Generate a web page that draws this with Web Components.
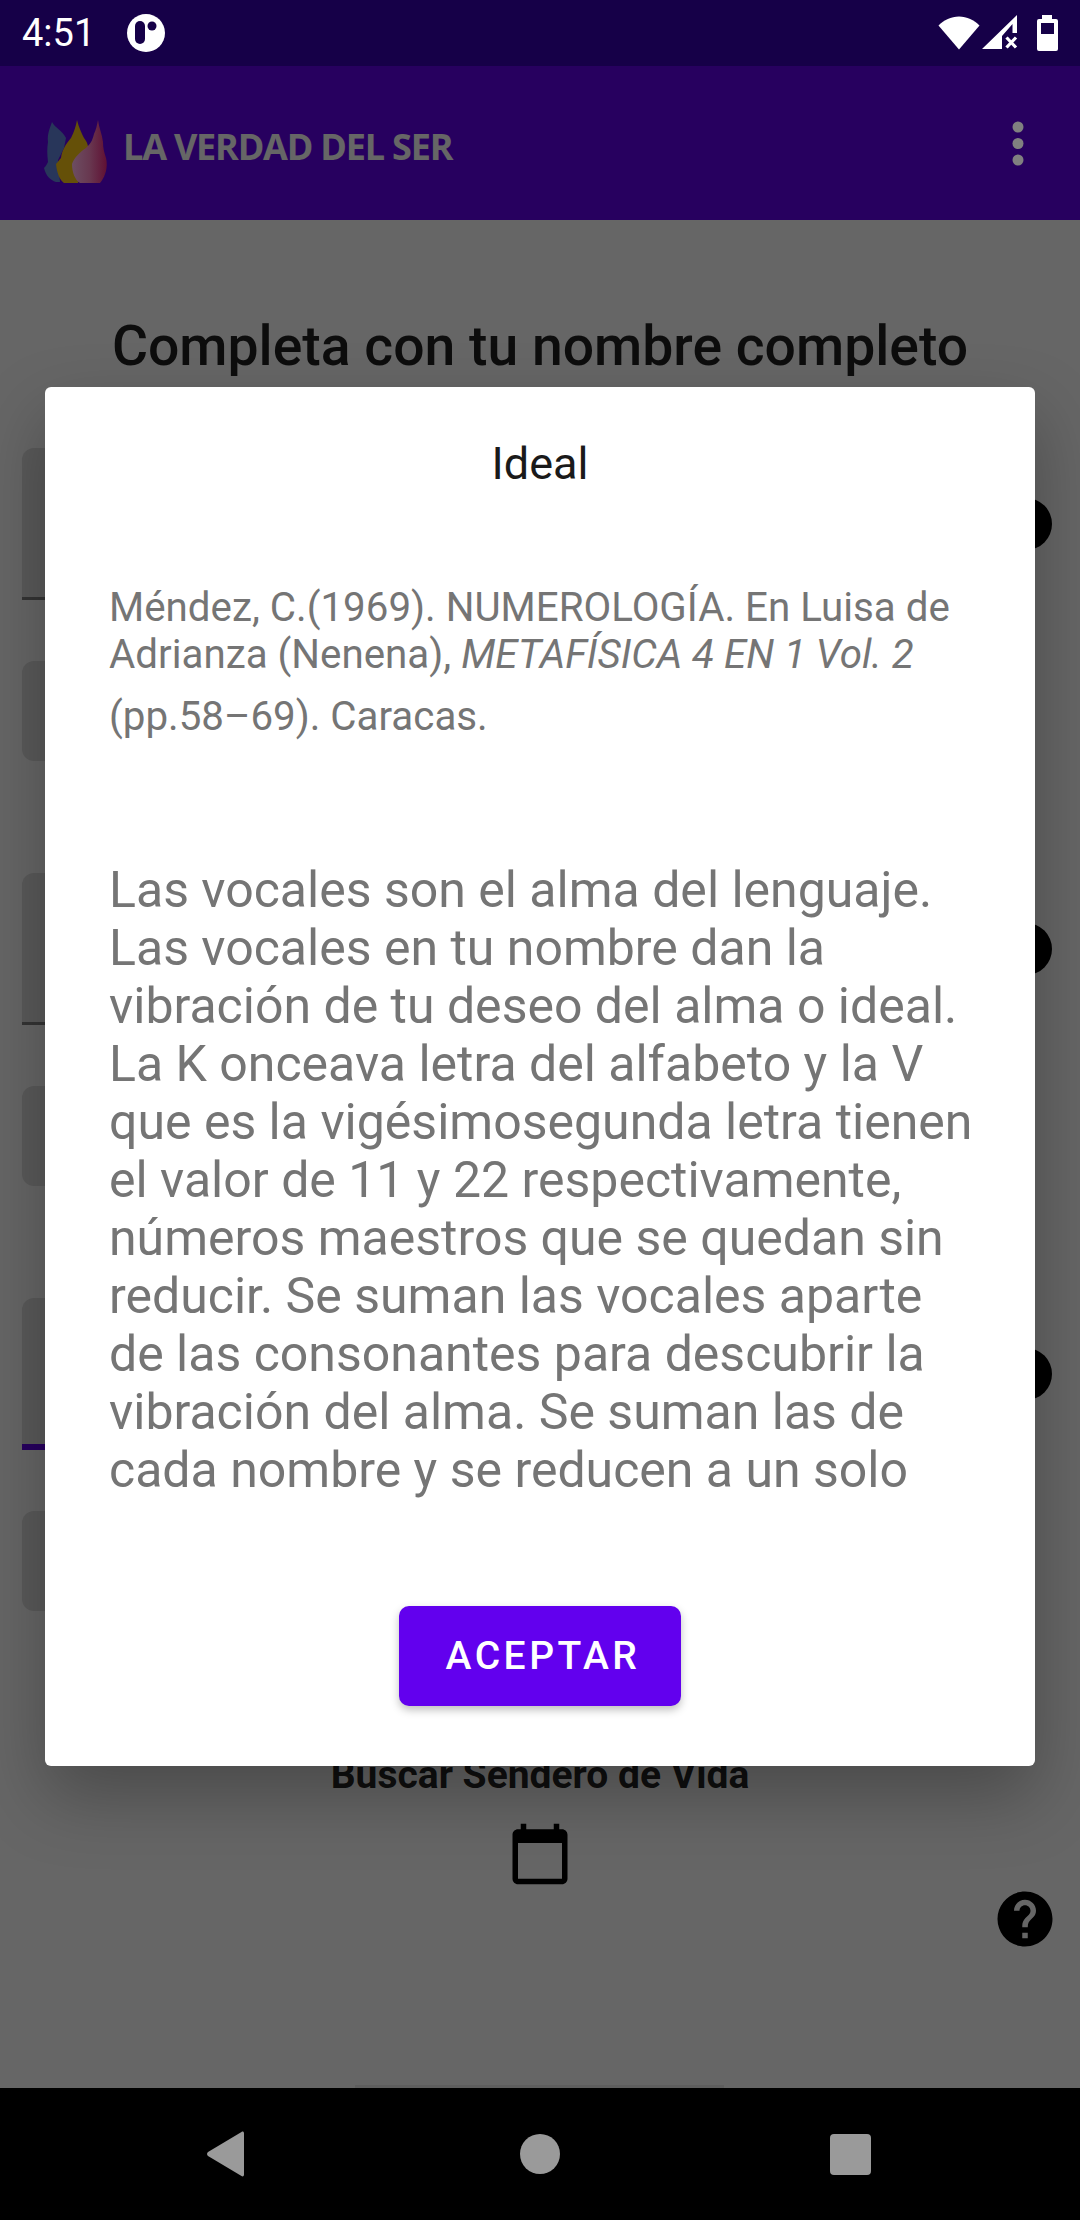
<!DOCTYPE html>
<html lang="es">
<head>
<meta charset="utf-8">
<title>La Verdad del Ser</title>
<style>
    html, body{ margin: 0; padding: 0; }
    body{
        width: 1080px;
        height: 2220px;
        overflow: hidden;
        display: flex;
        flex-direction: column;
        font-family: Roboto, "Liberation Sans", sans-serif;
        background: #000;
    }
</style>
</head>
<body>

<status-bar></status-bar>

<app-screen>
    <app-bar slot="bar">LA VERDAD DEL SER</app-bar>
    <name-form>Completa con tu nombre completo</name-form>
    <info-dialog slot="dialog" heading="Ideal">
        <p slot="cite">Méndez, C.(1969). NUMEROLOGÍA. En Luisa de Adrianza (Nenena), <i>METAFÍSICA 4 EN 1 Vol. 2</i></p>
        <p slot="cite" class="tail">(pp.58–69). Caracas.</p>
        Las vocales son el alma del lenguaje. Las vocales en tu nombre dan la vibración de tu deseo del alma o ideal. La K onceava letra del alfabeto y la V que es la vigésimosegunda letra tienen el valor de 11 y 22 respectivamente, números maestros que se quedan sin reducir. Se suman las vocales aparte de las consonantes para descubrir la vibración del alma. Se suman las de cada nombre y se reducen a un solo
    </info-dialog>
</app-screen>

<nav-bar></nav-bar>

<script>
class StatusBar extends HTMLElement{
    constructor(){
        super()
        this.attachShadow({mode: 'open'})
        this.shadowRoot.innerHTML = `
            <style>
                :host{
                    display: flex;
                    align-items: center;
                    flex: none;
                    height: 66px;
                    padding: 0 22px;
                    box-sizing: border-box;
                    background: #160048;
                    color: #fff;
                }
                span{ font-size: 38px; line-height: 66px; width: 105px; }
                .right{ margin-left: auto; display: flex; align-items: center; }
                svg{ display: block; }
            </style>
            <span>4:51</span>
            <svg width="38" height="38" viewBox="0 0 38 38">
                <circle cx="19" cy="19" r="19" fill="#fff"/>
                <rect x="8" y="7" width="10" height="23" rx="5" fill="#160048"/>
                <circle cx="25" cy="12" r="4.500" fill="#160048"/>
            </svg>
            <div class="right">
                <svg width="42" height="34" viewBox="0 0 42 34">
                    <path d="M0.500 9.500C6 4 13 0.500 21 0.500S36 4 41.500 9.500L21 33.500Z" fill="#fff"/>
                </svg>
                <svg style="margin-left:2px" width="36" height="36" viewBox="0 0 36 36">
                    <path d="M35 0V18H30.500V9L20 21V34H0Z" fill="#fff"/>
                    <path d="M24.500 22.500L34 32.500M34 22.500L24.500 32.500" stroke="#fff" stroke-width="3.200" fill="none"/>
                </svg>
                <svg style="margin-left:19px" width="21" height="36" viewBox="0 0 21 36">
                    <path d="M5 0H15V4H19Q21 4 21 6V34Q21 36 19 36H2Q0 36 0 34V6Q0 4 2 4H5Z" fill="#fff"/>
                    <rect x="4" y="8" width="13" height="11" fill="#160048"/>
                </svg>
            </div>
        `
    }
}

class AppBar extends HTMLElement{
    constructor(){
        super()
        this.attachShadow({mode: 'open'})
        this.shadowRoot.innerHTML = `
            <style>
                :host{
                    display: flex;
                    align-items: center;
                    flex: none;
                    height: 154px;
                    padding: 0 0 0 44px;
                    box-sizing: border-box;
                    background: #6200ee;
                    color: #fff;
                }
                .title{
                    font: 700 36px "Open Sans", sans-serif;
                    letter-spacing: -1.200px;
                    margin-left: 16px;
                    margin-top: 6px;
                }
                /* these two keep their own dimmed colours, so they sit above the scrim */
                .logo{ display: block; margin-top: 17px; position: relative; z-index: 1; }
                .dots{ margin-left: auto; margin-right: 56px; position: relative; z-index: 1; }
            </style>
            <svg class="logo" width="63" height="63" viewBox="0 0 63 63">
                <defs>
                    <linearGradient id="red" x1="0" x2="1">
                        <stop offset="0" stop-color="#6c4e62"/>
                        <stop offset=".5" stop-color="#683850"/>
                        <stop offset="1" stop-color="#601034"/>
                    </linearGradient>
                </defs>
                <path d="M8 2C11 8 18 10 22 18L20 28L14 40L16 62H12C6 60 2 56 0 48C2 46 3 44 4 42C3 34 3 28 4 22C3 14 6 8 8 2Z" fill="#28365a"/>
                <path d="M33 0C35 8 38 14 40 18C43 22 45 26 44 32L34 63H20C16 60 13 54 12 44C14 42 15 40 17 38C18 30 22 24 27 18C30 12 32 6 33 0Z" fill="#655008"/>
                <path d="M54 0C55 8 58 14 59 22C59 28 60 32 62 38C64 46 62 56 56 63H36C31 60 28 52 28 44C30 38 36 32 42 28C46 24 48 22 50 14C52 10 53 5 54 0Z" fill="url(#red)"/>
            </svg>
            <span class="title"><slot></slot></span>
            <svg class="dots" width="12" height="45" viewBox="0 0 12 45">
                <circle cx="6" cy="6" r="5.500" fill="#808080"/>
                <circle cx="6" cy="22.500" r="5.500" fill="#808080"/>
                <circle cx="6" cy="39" r="5.500" fill="#808080"/>
            </svg>
        `
    }
}

class NameField extends HTMLElement{
    constructor(){
        super()
        this.attachShadow({mode: 'open'})
        this.shadowRoot.innerHTML = `
            <style>
                :host{
                    display: flex;
                    align-items: center;
                    gap: 10px;
                    margin: 0 0 61px;
                }
                .box{
                    flex: 1;
                    height: 152px;
                    box-sizing: border-box;
                    background: #e0e0e0;
                    border-radius: 12px 12px 0 0;
                    border-bottom: 3px solid #828282;
                }
                :host([active]) .box{ border-bottom: 6px solid #6200ee; }
                .help{ flex: none; width: 52px; height: 52px; border-radius: 50%; background: #000; }
            </style>
            <div class="box"></div>
            <div class="help"></div>
        `
    }
}

class ResultBox extends HTMLElement{
    constructor(){
        super()
        this.attachShadow({mode: 'open'})
        this.shadowRoot.innerHTML = `
            <style>
                :host{
                    display: block;
                    height: 100px;
                    margin: 0 62px 112px 0;
                    background: #e0e0e0;
                    border-radius: 12px;
                }
            </style>
        `
    }
}

class NameForm extends HTMLElement{
    constructor(){
        super()
        this.attachShadow({mode: 'open'})
        this.shadowRoot.innerHTML = `
            <style>
                :host{
                    display: flex;
                    flex-direction: column;
                    flex: 1;
                    position: relative;
                    padding: 96px 0 0 22px;
                    background: #fff;
                    color: rgba(0,0,0,.87);
                }
                h1{
                    margin: 0 0 70px -22px;
                    font: 500 55.300px/62px Roboto, sans-serif;
                    text-align: center;
                }
                .fields{ display: flex; flex-direction: column; margin-right: 28px; }
                .search{
                    margin: 32px 0 0 -22px;
                    font: 700 39px/40px Roboto, sans-serif;
                    text-align: center;
                }
                .cal{ display: block; margin: 26px 0 0 485px; }
                .ask{ position: absolute; right: 22px; bottom: 136px; display: block; }
                .edge{ position: absolute; left: 355px; width: 369px; bottom: 0; height: 3px; background: #ececec; }
            </style>
            <h1><slot></slot></h1>
            <div class="fields">
                <name-field></name-field><result-box></result-box>
                <name-field></name-field><result-box></result-box>
                <name-field active></name-field><result-box></result-box>
            </div>
            <p class="search">Buscar Sendero de Vida</p>
            <svg class="cal" width="66" height="66" viewBox="0 0 24 24">
                <path d="M20 3h-1V1h-2v2H7V1H5v2H4c-1.100 0-2 .9-2 2v16c0 1.100.9 2 2 2h16c1.100 0 2-.9 2-2V5c0-1.100-.9-2-2-2zm0 18H4V8h16v13z" fill="#000"/>
            </svg>
            <svg class="ask" width="66" height="66" viewBox="0 0 24 24">
                <path d="M12 2C6.480 2 2 6.480 2 12s4.480 10 10 10 10-4.480 10-10S17.520 2 12 2zm1 17h-2v-2h2v2zm2.070-7.750l-.9.920C13.450 12.900 13 13.500 13 15h-2v-.5c0-1.100.45-2.100 1.170-2.830l1.240-1.260c.37-.36.590-.86.590-1.410 0-1.100-.9-2-2-2s-2 .9-2 2H8c0-2.210 1.790-4 4-4s4 1.790 4 4c0 .88-.36 1.680-.93 2.250z" fill="#000"/>
            </svg>
            <div class="edge"></div>
        `
    }
}

class InfoDialog extends HTMLElement{
    constructor(){
        super()
        this.attachShadow({mode: 'open'})
        this.shadowRoot.innerHTML = `
            <style>
                :host{
                    position: absolute;
                    z-index: 2;
                    left: 45px;
                    top: 321px;
                    width: 990px;
                    height: 1379px;
                    box-sizing: border-box;
                    display: flex;
                    flex-direction: column;
                    background: #fff;
                    border-radius: 6px;
                    box-shadow: 0 30px 70px rgba(0,0,0,.28);
                }
                h2{
                    margin: 54px 0 0;
                    font: 400 45px/46px Roboto, sans-serif;
                    text-align: center;
                    color: #1a1a1a;
                }
                .cite{
                    margin: 97px 60px 0 64px;
                    font-size: 40.300px;
                    line-height: 47px;
                    color: #757575;
                }
                .body{
                    margin: 121px 60px 0 64px;
                    font-size: 50px;
                    line-height: 58px;
                    color: #757575;
                    height: 638px;
                    overflow: hidden;
                }
                button{
                    display: block;
                    align-self: center;
                    margin: 107px 0 0;
                    width: 282px;
                    height: 100px;
                    padding: 0 0 0 6px;
                    border: 0;
                    border-radius: 10px;
                    background: #6200ee;
                    color: #fff;
                    font: 500 39px Roboto, sans-serif;
                    letter-spacing: 3.500px;
                    box-shadow: 0 4px 8px rgba(0,0,0,.25);
                }
                ::slotted(p){ margin: 0; }
                ::slotted(p.tail){ margin-top: 15px; }
            </style>
            <h2></h2>
            <div class="cite"><slot name="cite"></slot></div>
            <div class="body"><slot></slot></div>
            <button>ACEPTAR</button>
        `
    }
    connectedCallback(){
        this.shadowRoot.querySelector('h2').textContent = this.getAttribute('heading')
    }
}

class AppScreen extends HTMLElement{
    constructor(){
        super()
        this.attachShadow({mode: 'open'})
        this.shadowRoot.innerHTML = `
            <style>
                :host{
                    display: flex;
                    flex-direction: column;
                    flex: 1;
                    position: relative;
                    overflow: hidden;
                }
                #scrim{
                    position: absolute;
                    top: 0;
                    left: 0;
                    right: 0;
                    bottom: 0;
                    background: rgba(0,0,0,.6);
                }
            </style>
            <slot name="bar"></slot>
            <slot></slot>
            <div id="scrim"></div>
            <slot name="dialog"></slot>
        `
    }
}

class NavBar extends HTMLElement{
    constructor(){
        super()
        this.attachShadow({mode: 'open'})
        this.shadowRoot.innerHTML = `
            <style>
                :host{
                    display: flex;
                    align-items: center;
                    justify-content: space-between;
                    flex: none;
                    height: 132px;
                    padding: 0 209px 0 207px;
                    box-sizing: border-box;
                    background: #000;
                }
                svg{ display: block; }
                .home{ margin-left: 5px; }
            </style>
            <svg width="38" height="46" viewBox="0 0 38 46">
                <path d="M37 2.500V43.500C37 45.500 35.500 46 34.500 45L1 25C-.3 24-.3 22 1 21L34.500 1C35.500 0 37 .5 37 2.500Z" fill="#9a9a9a"/>
            </svg>
            <svg class="home" width="40" height="40" viewBox="0 0 40 40"><circle cx="20" cy="20" r="20" fill="#9a9a9a"/></svg>
            <svg width="41" height="41" viewBox="0 0 41 41"><rect width="41" height="41" rx="4" fill="#9a9a9a"/></svg>
        `
    }
}

customElements.define('status-bar', StatusBar)
customElements.define('app-bar', AppBar)
customElements.define('name-field', NameField)
customElements.define('result-box', ResultBox)
customElements.define('name-form', NameForm)
customElements.define('info-dialog', InfoDialog)
customElements.define('app-screen', AppScreen)
customElements.define('nav-bar', NavBar)
</script>
</body>
</html>
